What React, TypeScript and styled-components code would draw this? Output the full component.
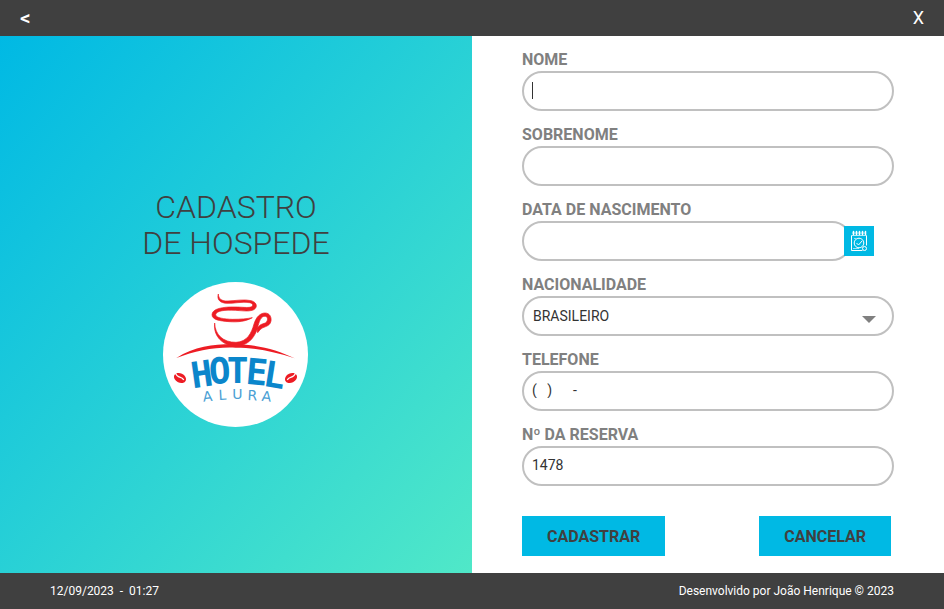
import React from "react";
import styled, { createGlobalStyle } from "styled-components";

const GlobalStyle = createGlobalStyle`
  *, *::before, *::after { box-sizing: border-box; }
  body { margin: 0; background: #ffffff; font-family: Roboto, "Liberation Sans", sans-serif; }
  button, input, select { font-family: inherit; }
`;

const Page = styled.div`
  display: grid;
  grid-template-rows: 36px 1fr 36px;
  min-height: 100vh;
`;

const TopBar = styled.header`
  display: flex;
  align-items: center;
  justify-content: space-between;
  padding: 0 20px;
  background: #404040;
`;

const BarButton = styled.button<{ $back?: boolean }>`
  padding: 0;
  border: 0;
  background: transparent;
  color: #ffffff;
  font-size: ${(p) => (p.$back ? 21 : 18)}px;
  font-weight: ${(p) => (p.$back ? 500 : 400)};
  line-height: 36px;
  cursor: pointer;
`;

const Main = styled.main`
  display: grid;
  grid-template-columns: 1fr 1fr;
`;

const Hero = styled.section`
  display: flex;
  flex-direction: column;
  align-items: center;
  justify-content: center;
  gap: 21px;
  padding-top: 7px;
  background: linear-gradient(to bottom right, #00b9e4, #50e8c8);
`;

const Title = styled.h1`
  margin: 0;
  color: #404040;
  font-size: 32px;
  font-weight: 300;
  line-height: 36px;
  text-align: center;
`;

const LogoSvg = styled.svg`
  display: block;
  width: 146px;
  height: 145px;
`;

const Form = styled.form`
  display: flex;
  flex-direction: column;
  gap: 13px;
  padding: 13px 50px 17px;
`;

const Field = styled.div`
  display: flex;
  flex-direction: column;
`;

const Label = styled.label`
  color: #808080;
  font-size: 16px;
  font-weight: 700;
  line-height: 22px;
`;

const Control = styled.div`
  position: relative;
  display: flex;
  align-items: center;
`;

const controlStyle = `
  flex: 1;
  min-width: 0;
  height: 40px;
  border: 2px solid #c0c0c0;
  border-radius: 20px;
  outline: none;
  background: #ffffff;
  color: #333333;
  font-size: 14px;
`;

const TextInput = styled.input`
  ${controlStyle}
  padding: 0 8px 2px;
`;

const Select = styled.select`
  ${controlStyle}
  appearance: none;
  padding: 0 40px 0 9px;
`;

const Caret = styled.span`
  position: absolute;
  left: 10px;
  top: 11px;
  width: 1px;
  height: 17px;
  background: #333333;
  pointer-events: none;
`;

const Arrow = styled.svg`
  position: absolute;
  right: 18px;
  top: 20px;
  width: 14px;
  height: 7px;
  pointer-events: none;
`;

const CalendarButton = styled.button`
  z-index: 1;
  width: 30px;
  height: 30px;
  margin: 0 20px 0 -8px;
  padding: 0;
  border: 0;
  background: #00b9e4;
  cursor: pointer;

  svg { display: block; }
`;

const Actions = styled.div`
  display: flex;
  justify-content: space-between;
  margin-top: 17px;
  padding-right: 3px;
`;

const ActionButton = styled.button`
  height: 40px;
  padding: 0 25px;
  border: 0;
  background: #00b9e4;
  color: #404040;
  font-size: 16px;
  font-weight: 700;
  cursor: pointer;
`;

const Footer = styled.footer`
  display: flex;
  align-items: center;
  justify-content: space-between;
  padding: 0 50px;
  background: #404040;
  color: #ffffff;
  font-size: 12px;
  white-space: pre;
`;

function Logo() {
  return (
    <LogoSvg viewBox="0 0 438 435" role="img" aria-label="Hotel Alura">
      <circle cx="217.5" cy="217.5" r="217.5" fill="#ffffff" />
      <g fill="#ed1c24">
        <g stroke="#ed1c24" strokeWidth="2" strokeLinejoin="round">
          <path d="M166 36 C166 50 176 58 195 57 C218 56 244 51 265 56 C285 62 284 80 268 85 C255 89 235 86 217 85 C188 83 159 86 158 98 C158 108 185 111 208 112 C233 112 253 110 268 107 C250 118 224 121 199 119 C169 117 147 113 147 98 C147 80 180 74 216 75 C236 75 255 78 263 75 C272 72 271 64 260 62 C237 58 212 65 192 64 C171 63 161 53 166 36 Z" />
          <path d="M155 123 C156 158 180 181 219 181 C253 179 265 154 273 126 C279 106 291 93 306 93 C319 93 326 104 324 117 C320 137 298 132 289 146 L284 152 C278 137 291 127 304 124 C315 121 317 105 307 103 C294 101 288 119 284 137 C276 164 260 183 238 189 L196 189 C167 178 151 153 155 123 Z" />
        </g>
        <path d="M40 228 C98 190 162 186 218 187 C282 187 343 203 395 229 C333 209 278 197 218 197 C158 194 98 206 40 228 Z" />
        <ellipse cx="51" cy="288" rx="19" ry="14" transform="rotate(25 51 288)" />
        <ellipse cx="384" cy="288" rx="19" ry="14" transform="rotate(-25 384 288)" />
      </g>
      <path d="M37 272 Q40 283 52 286 Q60 288 62 294 M398 272 Q395 283 383 286 Q375 288 373 294" fill="none" stroke="#ffffff" strokeWidth="4" />
      <text fontFamily="'DejaVu Sans Mono', monospace">
        <tspan
          x="89 140 191 246 297"
          y="319 307 303 305 311"
          rotate="-8 -4 0 5 9"
          fill="#0b86cb"
          fontWeight="700"
          fontSize="108"
        >
          HOTEL
        </tspan>
        <tspan
          x="121 167 208 253 295"
          y="359 354 351 354 356"
          rotate="-6 -3 0 3 6"
          fill="#4a9fd4"
          fontFamily="'DejaVu Sans', sans-serif"
          fontWeight="400"
          fontSize="42"
        >
          ALURA
        </tspan>
      </text>
    </LogoSvg>
  );
}

function CalendarIcon() {
  return (
    <svg width="30" height="30" viewBox="0 0 30 30" fill="none" stroke="#ffffff" aria-hidden="true">
      <path d="M7.5 9.5v15h11M22.5 9.5v10" />
      <path d="M7.5 9.5h15" strokeOpacity=".7" />
      <path d="M9.5 5.5v3M12.5 5.5v3M15.5 5.5v3M18.5 5.5v3M21.5 5.5v3" strokeWidth="1.5" strokeLinecap="round" />
      <path d="M8 7h14" strokeOpacity=".6" />
      <circle cx="15" cy="17" r="4.8" />
      <path d="M12.5 17l2 2 3.5-4" />
      <circle cx="20.5" cy="22.5" r="2" />
      <path d="M9 22.5h6M10 12.5h2" strokeOpacity=".6" />
    </svg>
  );
}

export default function App() {
  return (
    <>
      <GlobalStyle />
      <Page>
        <TopBar>
          <BarButton type="button" $back>{"<"}</BarButton>
          <BarButton type="button">X</BarButton>
        </TopBar>
        <Main>
          <Hero>
            <Title>CADASTRO<br />DE HOSPEDE</Title>
            <Logo />
          </Hero>
          <Form onSubmit={(e) => e.preventDefault()}>
            <Field>
              <Label htmlFor="nome">NOME</Label>
              <Control>
                <TextInput id="nome" type="text" />
                <Caret />
              </Control>
            </Field>
            <Field>
              <Label htmlFor="sobrenome">SOBRENOME</Label>
              <Control><TextInput id="sobrenome" type="text" /></Control>
            </Field>
            <Field>
              <Label htmlFor="nascimento">DATA DE NASCIMENTO</Label>
              <Control>
                <TextInput id="nascimento" type="text" />
                <CalendarButton type="button" aria-label="Abrir calendário">
                  <CalendarIcon />
                </CalendarButton>
              </Control>
            </Field>
            <Field>
              <Label htmlFor="nacionalidade">NACIONALIDADE</Label>
              <Control>
                <Select id="nacionalidade" defaultValue="BRASILEIRO">
                  <option>BRASILEIRO</option>
                </Select>
                <Arrow viewBox="0 0 14 7" aria-hidden="true">
                  <path d="M0 0h14L7 7z" fill="#808080" />
                </Arrow>
              </Control>
            </Field>
            <Field>
              <Label htmlFor="telefone">TELEFONE</Label>
              <Control><TextInput id="telefone" type="tel" defaultValue="(   )      -" /></Control>
            </Field>
            <Field>
              <Label htmlFor="reserva">Nº DA RESERVA</Label>
              <Control><TextInput id="reserva" type="text" defaultValue="1478" /></Control>
            </Field>
            <Actions>
              <ActionButton type="submit">CADASTRAR</ActionButton>
              <ActionButton type="button">CANCELAR</ActionButton>
            </Actions>
          </Form>
        </Main>
        <Footer>
          <time dateTime="2023-09-12T01:27">{"12/09/2023  -  01:27"}</time>
          <span>Desenvolvido por João Henrique © 2023</span>
        </Footer>
      </Page>
    </>
  );
}
